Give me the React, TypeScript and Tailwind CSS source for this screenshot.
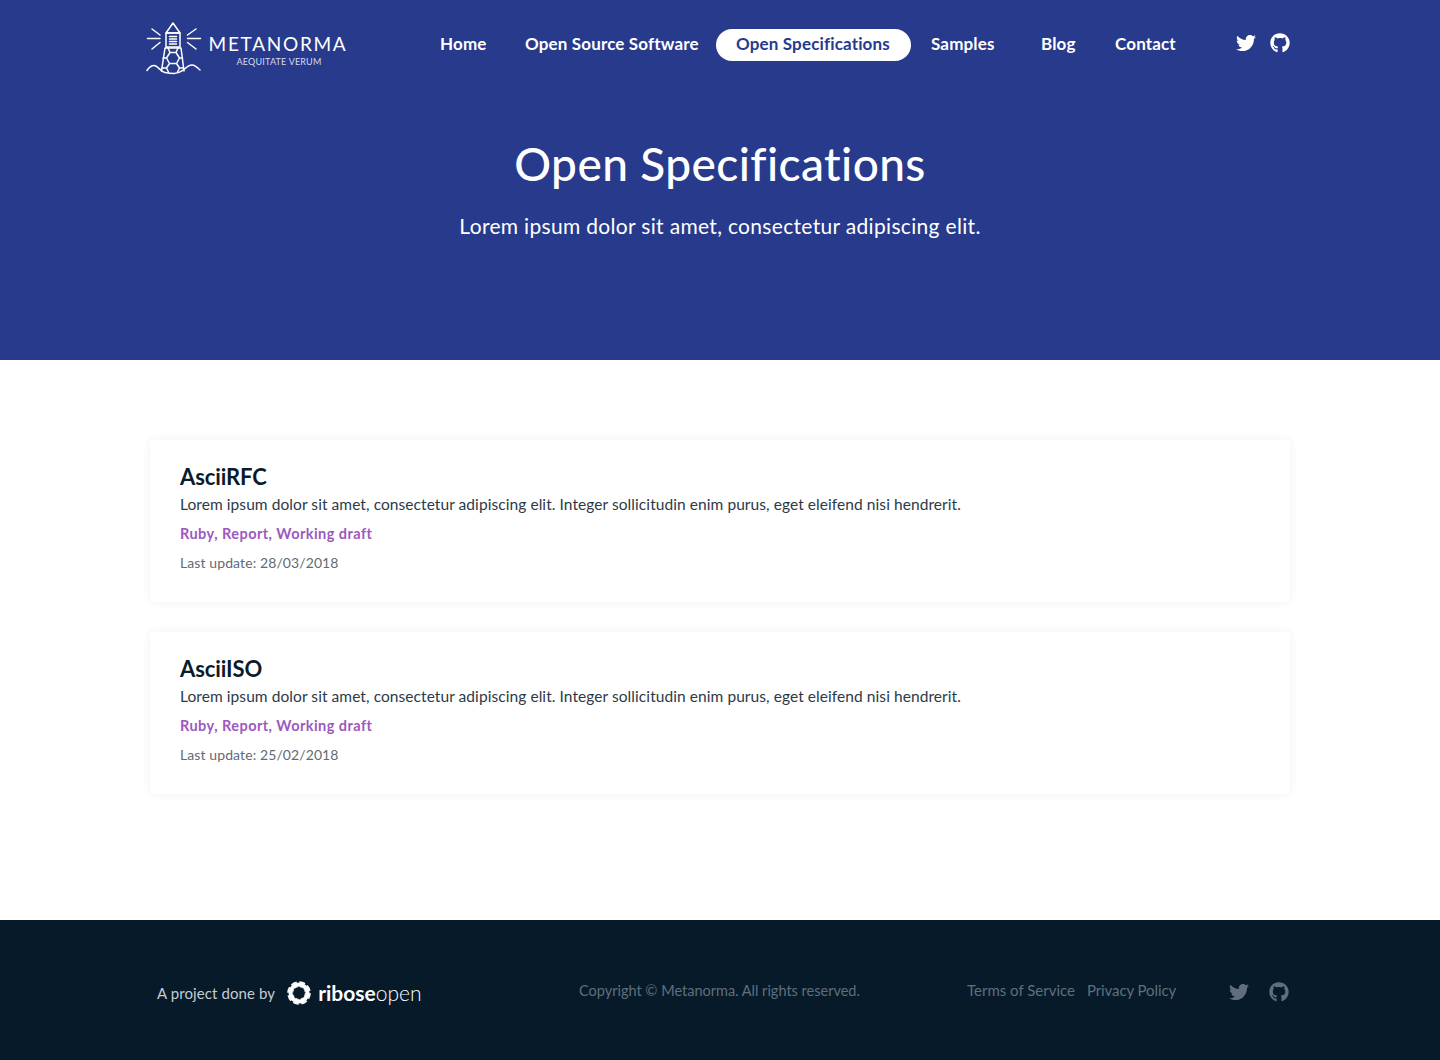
import { FaTwitter, FaGithub } from "react-icons/fa";

const navItems = [
  { label: "Home", width: "w-[85px]", active: false },
  { label: "Open Source Software", width: "w-[211px]", active: false },
  { label: "Open Specifications", width: "w-[195px]", active: true },
  { label: "Samples", width: "w-[110px]", active: false },
  { label: "Blog", width: "w-[74px]", active: false },
  { label: "Contact", width: "w-[100px]", active: false },
];

const specs = [
  { title: "AsciiRFC", date: "28/03/2018" },
  { title: "AsciiISO", date: "25/02/2018" },
];

function Lighthouse() {
  return (
    <svg viewBox="0 0 56 54" className="w-[56px] h-[54px] shrink-0" fill="none" stroke="white" strokeWidth="1.5" strokeLinejoin="round" strokeLinecap="round">
      <path d="M20 11L27 1l7 10z" />
      <path d="M20 11h14v14H20z" />
      <path d="M23.500 14.500h7M23.500 17h7M23.500 19.500h7M23.500 22h7" />
      <path d="M19 26h16l3 23M19 26l-3.500 23" />
      <path d="M22 26l2 4.500h6l2-4.500M24 30.500l-3.500 5.500 3 5.500h7l3-5.500-3.500-5.500M20.500 36h-3.500M33.500 36h3M23.500 41.500l-3 4.500 2 4M30.500 41.500l3 4.500-2 4M20.500 46h-4.500M33.500 46h4" />
      <path d="M1 48.500c2-3 4.500-5 7-5 4 0 6 6 11 7 3 .6 6 1 9 1 5 0 7-2 10-4 3-3 5-4.500 8-4.500 3 0 6 3 8 5" />
      <path d="M6 7l8 6M1.500 16.500H14M6 27l8-6.500M50 7l-8.500 6M54.500 16.500H41.500M50 27l-8.500-6.500" />
    </svg>
  );
}

function RiboseMark() {
  return (
    <svg viewBox="0 0 26 26" className="w-[26px] h-[26px]" fill="none" stroke="white">
      <circle cx="13" cy="13" r="8.500" strokeWidth="4" />
      <circle cx="13" cy="13" r="11" strokeWidth="1.600" strokeDasharray="6 2.640" />
      <circle cx="13" cy="13" r="6.300" strokeWidth="1" strokeDasharray="3 1.950" />
    </svg>
  );
}

function SpecCard({ title, date }: { title: string; date: string }) {
  return (
    <div className="bg-white h-[162px] px-[30px] pt-[24px] shadow-[0_0_10px_rgba(40,58,140,0.07)] rounded-[2px]">
      <h2 className="text-[22px] leading-[26px] font-bold text-[#0a1b2c] tracking-[-0.1px]">{title}</h2>
      <p className="mt-[2px] text-[15.500px] leading-[24px] text-[#2c3a48] tracking-[0.07px]">
        Lorem ipsum dolor sit amet, consectetur adipiscing elit. Integer sollicitudin enim purus, eget eleifend nisi hendrerit.
      </p>
      <p className="mt-[6px] text-[14.500px] leading-[24px] font-bold text-[#9b59c0] tracking-[0.45px]">Ruby, Report, Working draft</p>
      <p className="mt-[5px] text-[14px] leading-[24px] text-[#5f6b76] tracking-[0.1px]">Last update: {date}</p>
    </div>
  );
}

export default function App() {
  return (
    <div className="font-['Lato',sans-serif] min-h-[1060px] bg-white">
      <header className="bg-[#283a8c] h-[360px] text-white">
        <div className="flex items-start w-[1144px] ml-[146px] pt-[22px]">
          <div className="flex items-center gap-[8px] w-[274px] shrink-0">
            <Lighthouse />
            <div className="w-[136px] flex flex-col items-center mt-[2px]">
              <span className="text-[19px] leading-[24px] tracking-[1.7px] whitespace-nowrap">METANORMA</span>
              <span className="text-[9px] leading-[12px] tracking-[0.2px] text-[#d5daf0] whitespace-nowrap ml-[2px]">AEQUITATE VERUM</span>
            </div>
          </div>
          <nav className="flex items-center h-[32px] mt-[7px] w-[775px] shrink-0">
            {navItems.map((item) => (
              <a
                key={item.label}
                className={`${item.width} shrink-0 h-[32px] flex items-center pl-5 pb-[2px] rounded-full whitespace-nowrap text-[17px] font-bold tracking-[0.15px] ${item.active ? "bg-white text-[#283a8c]" : "text-white"}`}
              >
                {item.label}
              </a>
            ))}
          </nav>
          <div className="flex items-center gap-[14px] ml-[41px] h-[42px]">
            <FaTwitter className="w-[20px] h-[20px]" />
            <FaGithub className="w-[20px] h-[20px]" />
          </div>
        </div>
        <h1 className="mt-[58px] text-center text-[46px] leading-[60px] font-medium tracking-[0.4px]">Open Specifications</h1>
        <p className="mt-[17px] text-center text-[21px] leading-[30px] tracking-[0.32px]">Lorem ipsum dolor sit amet, consectetur adipiscing elit.</p>
      </header>

      <main className="h-[560px] pt-[80px] px-[150px] flex flex-col gap-[30px]">
        {specs.map((spec) => (
          <SpecCard key={spec.title} title={spec.title} date={spec.date} />
        ))}
      </main>

      <footer className="bg-[#071a2a] h-[140px] flex items-center pl-[157px] text-[#5f6f7d]">
        <div className="flex items-center w-[422px] text-[15px] text-[#c5ccd2] mt-[6px]">
          <span className="tracking-[0.1px]">A project done by</span>
          <span className="ml-[11px]"><RiboseMark /></span>
          <span className="ml-[6px] text-[21px] leading-[28px] text-white font-bold">ribose</span>
          <span className="text-[21px] leading-[28px] text-white font-light">open</span>
        </div>
        <div className="w-[388px] mt-[2px] text-[14.500px]">Copyright © Metanorma. All rights reserved.</div>
        <div className="flex gap-[12px] w-[262px] mt-[1px] text-[15px]">
          <span>Terms of Service</span>
          <span className="tracking-[-0.1px]">Privacy Policy</span>
        </div>
        <div className="flex gap-[20px] mt-[4px]">
          <FaTwitter className="w-[20px] h-[20px]" />
          <FaGithub className="w-[20px] h-[20px]" />
        </div>
      </footer>
    </div>
  );
}
